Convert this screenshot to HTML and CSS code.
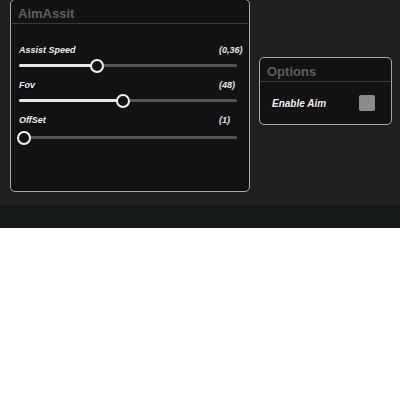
FILE: index.html
```html
<!DOCTYPE html>
<html lang="en">

<head>
    <meta charset="UTF-8">
    <meta name="viewport" content="width=device-width, initial-scale=1.0">
    <title>AimAssit</title>
    <link rel="stylesheet" href="styles.css">
</head>

<body>
    <div class="pantalla">
        <div class="contenido">
            <div class="panel panel-aim">
                <div class="panel-titulo">AimAssit</div>
                <div class="panel-cuerpo">
                    <div class="ajuste">
                        <div class="ajuste-fila">
                            <span class="ajuste-nombre">Assist Speed</span>
                            <span class="ajuste-valor">(0,36)</span>
                        </div>
                        <div class="barra">
                            <div class="barra-llena" style="width: 78px"></div>
                            <div class="barra-bola"></div>
                        </div>
                    </div>
                    <div class="ajuste">
                        <div class="ajuste-fila">
                            <span class="ajuste-nombre">Fov</span>
                            <span class="ajuste-valor">(48)</span>
                        </div>
                        <div class="barra">
                            <div class="barra-llena" style="width: 104px"></div>
                            <div class="barra-bola"></div>
                        </div>
                    </div>
                    <div class="ajuste ajuste-ultimo">
                        <div class="ajuste-fila">
                            <span class="ajuste-nombre">OffSet</span>
                            <span class="ajuste-valor">(1)</span>
                        </div>
                        <div class="barra">
                            <div class="barra-llena" style="width: 5px"></div>
                            <div class="barra-bola"></div>
                        </div>
                    </div>
                </div>
            </div>

            <div class="panel panel-opciones">
                <div class="panel-titulo">Options</div>
                <div class="opcion">
                    <span class="ajuste-nombre opcion-nombre">Enable Aim</span>
                    <div class="casilla"></div>
                </div>
            </div>
        </div>
        <div class="pie"></div>
    </div>
</body>

</html>
```

FILE: styles.css
```css
* {
    margin: 0;
    padding: 0;
    box-sizing: border-box;
}

body {
    background-color: #fff;
    font-family: "Liberation Sans", Arial, sans-serif;
}

.pantalla {
    width: 400px;
}

.contenido {
    height: 205px;
    background-color: #1f1f1f;
    display: flex;
    align-items: flex-start;
    gap: 9px;
    padding-left: 10px;
}

.pie {
    height: 23px;
    background-color: #161a16;
}

.panel {
    background-color: #121212;
    border: 1.5px solid #a9a9a9;
    border-radius: 5px;
}

.panel-aim {
    width: 240px;
    height: 193px;
    margin-top: -1px;
}

.panel-opciones {
    width: 133px;
    height: 68px;
    margin-top: 57px;
}

.panel-titulo {
    height: 24px;
    padding: 6px 0 0 6px;
    margin: 0 1px;
    font-size: 13px;
    font-weight: bold;
    color: #5e5e5e;
    border-bottom: 1.5px solid #3a3a3a;
}

.panel-cuerpo {
    padding: 19px 9px 0 8px;
}

.ajuste {
    margin-bottom: 6px;
}

.ajuste-ultimo .barra {
    margin-top: 4px;
}

.ajuste-fila {
    display: flex;
    height: 14px;
    align-items: center;
}

.ajuste-nombre {
    font-size: 9px;
    font-style: italic;
    font-weight: bold;
    color: #f2f2f2;
    text-shadow: 1px 1px 1px #000;
}

.opcion-nombre {
    font-size: 10px;
}

.ajuste-valor {
    margin-left: auto;
    width: 21px;
    font-size: 9px;
    font-style: italic;
    font-weight: bold;
    color: #e6e6e6;
}

.barra {
    position: relative;
    display: flex;
    align-items: center;
    height: 13px;
    margin-top: 2px;
    width: 218px;
}

.barra::before {
    content: "";
    position: absolute;
    left: 0;
    right: 0;
    height: 3px;
    background-color: #555;
    border-radius: 2px;
}

.barra-llena {
    position: relative;
    height: 3px;
    background-color: #e8e8e8;
    border-radius: 2px;
}

.barra-bola {
    position: relative;
    flex: none;
    width: 14px;
    height: 14px;
    margin-left: -7px;
    border: 2.5px solid #f2f2f2;
    border-radius: 50%;
    background-color: #121212;
}

.opcion {
    display: flex;
    align-items: center;
    justify-content: space-between;
    padding: 13px 16px 0 12px;
}

.casilla {
    width: 16px;
    height: 16px;
    background-color: #8a8a8a;
    border-radius: 2px;
}
```
